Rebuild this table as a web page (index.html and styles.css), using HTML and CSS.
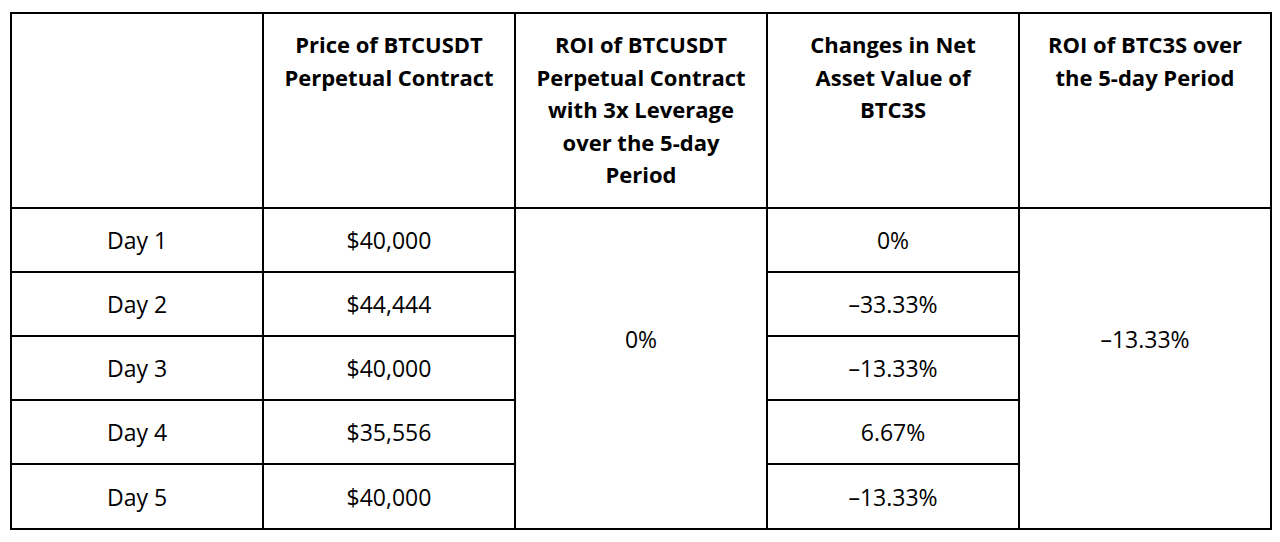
FILE: index.html
```html
<!DOCTYPE html>
<html>
<head>
<meta charset="utf-8">
<link rel="stylesheet" href="styles.css">
</head>
<body>
<table class="grid">
  <colgroup>
    <col class="c"><col class="c"><col class="c"><col class="c"><col class="c">
  </colgroup>
  <thead>
    <tr class="head">
      <th></th>
      <th>Price of BTCUSDT<br>Perpetual Contract</th>
      <th>ROI of BTCUSDT<br>Perpetual Contract<br>with 3x Leverage<br>over the 5-day<br>Period</th>
      <th>Changes in Net<br>Asset Value of<br>BTC3S</th>
      <th>ROI of BTC3S over<br>the 5-day Period</th>
    </tr>
  </thead>
  <tbody>
    <tr class="r">
      <td>Day 1</td>
      <td>$40,000</td>
      <td rowspan="5" class="merged">0%</td>
      <td>0%</td>
      <td rowspan="5" class="merged">–13.33%</td>
    </tr>
    <tr class="r">
      <td>Day 2</td>
      <td>$44,444</td>
      <td>–33.33%</td>
    </tr>
    <tr class="r">
      <td>Day 3</td>
      <td>$40,000</td>
      <td>–13.33%</td>
    </tr>
    <tr class="r">
      <td>Day 4</td>
      <td>$35,556</td>
      <td>6.67%</td>
    </tr>
    <tr class="r last">
      <td>Day 5</td>
      <td>$40,000</td>
      <td>–13.33%</td>
    </tr>
  </tbody>
</table>
</body>
</html>
```

FILE: styles.css
```css
html, body {
  margin: 0;
  padding: 0;
  background: #ffffff;
}
body {
  padding: 12px 0 0 10px;
  font-family: "Open Sans", Lato, sans-serif;
  color: #000000;
}
.grid {
  border-collapse: collapse;
  table-layout: fixed;
  width: 1260px;
}
.c {
  width: 252px;
}
.grid th,
.grid td {
  border: 2px solid #000000;
  text-align: center;
  padding: 0;
}
.grid th {
  height: 195px;
  vertical-align: top;
  font-weight: 700;
  font-size: 22px;
  line-height: 32.5px;
  padding: 14px 6px 0;
  box-sizing: border-box;
  white-space: nowrap;
}
.grid td {
  height: 64px;
  vertical-align: middle;
  font-size: 23px;
  box-sizing: border-box;
}
.grid tr.last td {
  height: 65px;
}
.grid td.merged {
  padding-bottom: 60px;
}
```
